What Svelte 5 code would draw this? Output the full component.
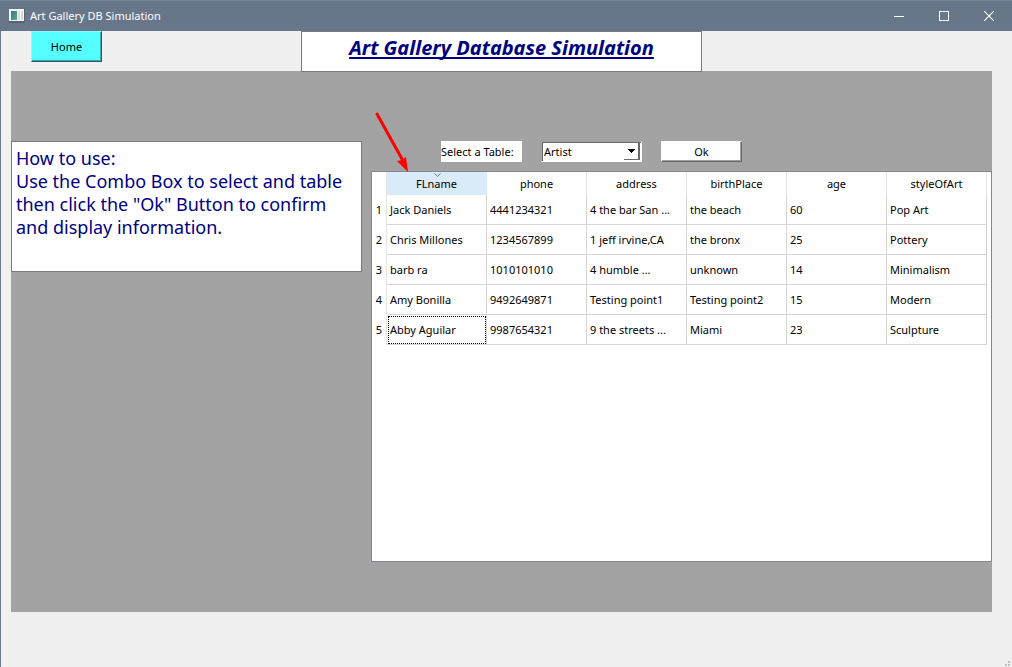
<script>
  const columns = ['FLname', 'phone', 'address', 'birthPlace', 'age', 'styleOfArt'];
  const rows = [
    ['Jack Daniels', '4441234321', '4 the bar San ...', 'the beach', '60', 'Pop Art'],
    ['Chris Millones', '1234567899', '1 jeff irvine,CA', 'the bronx', '25', 'Pottery'],
    ['barb ra', '1010101010', '4 humble ...', 'unknown', '14', 'Minimalism'],
    ['Amy Bonilla', '9492649871', 'Testing point1', 'Testing point2', '15', 'Modern'],
    ['Abby Aguilar', '9987654321', '9 the streets ...', 'Miami', '23', 'Sculpture']
  ];
</script>

<div class="window">
  <header class="titlebar">
    <svg class="app-icon" width="16" height="14" viewBox="0 0 16 14" aria-hidden="true">
      <defs>
        <linearGradient id="pane" x1="0" y1="0" x2="1" y2="1">
          <stop offset="0" stop-color="#3e6f9c" />
          <stop offset="1" stop-color="#55b077" />
        </linearGradient>
      </defs>
      <rect x="0" y="0" width="16" height="14" rx="1" fill="#59636f" />
      <rect x="0" y="0" width="15" height="12" fill="#f4f4f4" />
      <rect x="2" y="2" width="6" height="9" fill="url(#pane)" />
      <rect x="9" y="2" width="2" height="9" fill="#dedfe0" />
      <rect x="12" y="2" width="2" height="9" fill="#d3dcd6" />
    </svg>
    <span class="caption">Art Gallery DB Simulation</span>
    <button class="win" aria-label="Minimize">
      <svg width="10" height="10" viewBox="0 0 10 10"><path d="M0 5.5H10" stroke="#fff" /></svg>
    </button>
    <button class="win" aria-label="Maximize">
      <svg width="10" height="10" viewBox="0 0 10 10"><rect x=".5" y=".5" width="9" height="9" fill="none" stroke="#fff" /></svg>
    </button>
    <button class="win" aria-label="Close">
      <svg width="10" height="10" viewBox="0 0 10 10"><path d="M0 0L10 10M10 0L0 10" stroke="#fff" stroke-width="1.2" /></svg>
    </button>
  </header>

  <div class="top">
    <button class="home">Home</button>
    <h1>Art Gallery Database Simulation</h1>
  </div>

  <main>
    <section class="help">
      How to use:<br />Use the Combo Box to select and table then click the "Ok" Button to confirm and display information.
    </section>
    <section class="data">
      <div class="controls">
        <label for="table-name">Select a Table:</label>
        <div class="combo">
          <select id="table-name"><option>Artist</option></select>
          <span class="drop" aria-hidden="true">
            <svg width="7" height="4" viewBox="0 0 7 4" shape-rendering="crispEdges"><path d="M0 0H7V1H6V2H5V3H4V4H3V3H2V2H1V1H0Z" /></svg>
          </span>
        </div>
        <button class="ok">Ok</button>
      </div>
      <div class="grid">
        <table>
          <thead>
            <tr>
              <th class="num"></th>
              {#each columns as name, i}
                <th class:sorted={i === 0}>
                  {name}
                  {#if i === 0}
                    <svg class="sort" width="7" height="4" viewBox="0 0 7 4" aria-hidden="true"><path d="M.5 .5L3.5 3.3L6.5 .5" fill="none" stroke="#6d7b88" /></svg>
                  {/if}
                </th>
              {/each}
            </tr>
          </thead>
          <tbody>
            {#each rows as row, r}
              <tr>
                <th class="num">{r + 1}</th>
                {#each row as cell, c}
                  <td class:current={r === 4 && c === 0}>{cell}</td>
                {/each}
              </tr>
            {/each}
          </tbody>
        </table>
      </div>
      <svg class="arrow" width="36" height="62" viewBox="0 0 36 62" aria-hidden="true">
        <path d="M3 3L28 48" stroke="#f00" stroke-width="3" stroke-linecap="round" />
        <path d="M34 61L23 50L28 49L32 46Z" fill="#f00" />
      </svg>
    </section>
  </main>
  <svg class="grip" width="6" height="6" viewBox="0 0 6 6" fill="#bfbfbf" aria-hidden="true">
    <path d="M3 0h2v2h-2zM0 3h2v2h-2zM3 3h2v2h-2z" />
  </svg>
</div>

<style>
  :global(body) {
    margin: 0;
  }
  * {
    box-sizing: border-box;
  }
  .window {
    position: relative;
    min-height: 100vh;
    border-left: 1px solid #6a788b;
    background: #f0f0f0;
    color: #000;
    font: 11px/16px "Noto Sans", sans-serif;
  }
  button,
  select {
    font: inherit;
    color: inherit;
    margin: 0;
    border-radius: 0;
  }
  .titlebar {
    display: flex;
    align-items: center;
    height: 31px;
    margin-left: -1px;
    padding: 0 1px 0 9px;
    border-top: 1px solid #73849a;
    background: #687689;
    color: #fff;
  }
  .caption {
    flex: 1;
    padding-left: 5px;
  }
  .win {
    display: grid;
    place-items: center;
    width: 45px;
    height: 30px;
    padding: 0;
    border: 0;
    background: none;
  }
  .top {
    display: grid;
    grid-template-columns: 1fr 401px 1fr;
    align-items: start;
    height: 40px;
    padding: 0 20px 0 10px;
  }
  .home {
    width: 71px;
    height: 31px;
    margin-left: 20px;
    padding: 0;
    border: 1px solid;
    border-color: #8ff #1f5f5f #1f5f5f #8ff;
    box-shadow: inset -1px -1px #38a8a8;
    background: #5ff;
  }
  h1 {
    position: relative;
    height: 41px;
    margin: 0;
    border: 1px solid #7a7a7a;
    background: #fff;
    color: #000080;
    font: italic bold 20px/32px "Noto Sans", sans-serif;
    text-align: center;
    text-decoration: underline;
    text-decoration-thickness: 2px;
    text-underline-offset: 2px;
    text-decoration-skip-ink: none;
    white-space: nowrap;
  }
  main {
    display: grid;
    grid-template-columns: 351px 1fr;
    column-gap: 9px;
    align-items: start;
    margin: 0 20px 0 10px;
    padding: 70px 0 50px;
    background: #a3a3a3;
  }
  .help {
    min-height: 131px;
    padding: 5px 4px;
    border: 1px solid #7a7a7a;
    background: #fff;
    color: #000080;
    font-size: 18px;
    line-height: 23px;
  }
  .data {
    position: relative;
  }
  .controls {
    display: flex;
    gap: 19px;
    height: 30px;
    padding-left: 70px;
  }
  .controls label {
    width: 81px;
    height: 21px;
    background: #fff;
    line-height: 21px;
    white-space: nowrap;
  }
  .combo {
    position: relative;
    width: 101px;
    height: 21px;
  }
  .combo select {
    appearance: none;
    width: 100%;
    height: 21px;
    padding: 0 2px;
    border: 1px solid #fff;
    border-top-color: #a0a0a0;
    border-left-color: #a0a0a0;
    box-shadow: inset 1px 1px #696969;
    background: #fff;
  }
  .drop {
    position: absolute;
    top: 2px;
    right: 2px;
    display: grid;
    place-items: center;
    width: 16px;
    height: 17px;
    border: solid #696969;
    border-width: 0 2px 1px 0;
    pointer-events: none;
  }
  .ok {
    width: 81px;
    height: 21px;
    padding: 0;
    border: 1px solid;
    border-color: #fff #696969 #696969 #fff;
    box-shadow: inset -1px -1px #a0a0a0;
    background: #fff;
  }
  .grid {
    min-height: 391px;
    border: 1px solid #828790;
    background: #fff;
  }
  table {
    width: calc(100% - 4px);
    table-layout: fixed;
    border-spacing: 0;
  }
  th,
  td {
    padding: 0 3px;
    font-weight: 400;
    white-space: nowrap;
    overflow: hidden;
  }
  thead th {
    position: relative;
    height: 23px;
    border-right: 1px solid #e5e5e5;
  }
  .sorted {
    background: #d9ebf9;
    border-color: #d9ebf9;
  }
  .sort {
    position: absolute;
    top: 1px;
    left: calc(50% - 3px);
  }
  td {
    height: 30px;
    border: solid #d4d4d4;
    border-width: 0 1px 1px 0;
  }
  th.num {
    width: 15px;
    padding: 0;
    border-right: 1px solid #e5e5e5;
  }
  .current {
    outline: 1px dotted #000;
    outline-offset: -2px;
  }
  .arrow {
    position: absolute;
    left: 3px;
    top: -30px;
  }
  .grip {
    position: absolute;
    right: 1px;
    bottom: 0;
  }
</style>
